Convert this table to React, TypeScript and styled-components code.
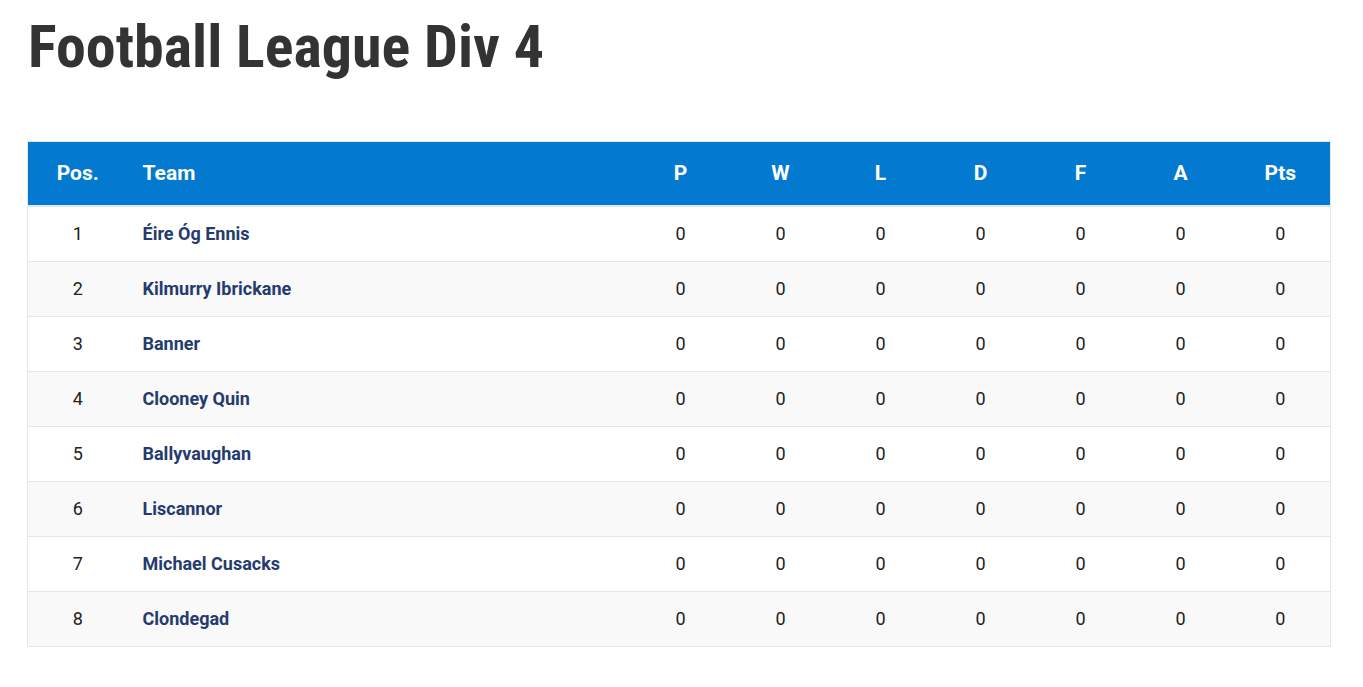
import styled, { createGlobalStyle } from 'styled-components';

const GlobalStyle = createGlobalStyle`
  body {
    margin: 0;
    background: #fff;
    font-family: Roboto, "Liberation Sans", sans-serif;
    color: #222;
  }
`;

const Page = styled.div`
  padding: 12px 32px 40px 27px;
`;

const Title = styled.h1`
  margin: 0 0 59px 1px;
  font-family: "Roboto Condensed", Roboto, sans-serif;
  font-stretch: condensed;
  font-weight: 700;
  font-size: 60px;
  line-height: 70px;
  color: #333;
`;

const Table = styled.table`
  width: 1304px;
  border-collapse: collapse;
  border: 1px solid #e6e6e6;
`;

const Head = styled.thead`
  background: #037acf;
  border-bottom: 2px solid #dde8ef;
`;

const Th = styled.th<{ $left?: boolean }>`
  height: 64px;
  padding: 0 15px;
  width: ${({ $left }) => ($left ? 'auto' : '100px')};
  box-sizing: border-box;
  text-align: ${({ $left }) => ($left ? 'left' : 'center')};
  color: #fff;
  font-size: 21px;
  font-weight: 700;
`;

const Row = styled.tr<{ $alt: boolean }>`
  background: ${({ $alt }) => ($alt ? '#f9f9f9' : '#fff')};
  border-top: 1px solid #e6e6e6;
`;

const Td = styled.td`
  height: 54px;
  padding: 0 15px;
  text-align: center;
  font-size: 18px;
  color: #222;
`;

const TeamCell = styled(Td)`
  text-align: left;
  font-weight: 700;
  color: #253b6e;
`;

const teams = [
  'Éire Óg Ennis',
  'Kilmurry Ibrickane',
  'Banner',
  'Clooney Quin',
  'Ballyvaughan',
  'Liscannor',
  'Michael Cusacks',
  'Clondegad',
];

const stats = ['P', 'W', 'L', 'D', 'F', 'A', 'Pts'];

export default function App() {
  return (
    <>
      <GlobalStyle />
      <Page>
        <Title>Football League Div 4</Title>
        <Table>
          <Head>
            <tr>
              <Th>Pos.</Th>
              <Th $left>Team</Th>
              {stats.map((s) => (
                <Th key={s}>{s}</Th>
              ))}
            </tr>
          </Head>
          <tbody>
            {teams.map((team, i) => (
              <Row key={team} $alt={i % 2 === 1}>
                <Td>{i + 1}</Td>
                <TeamCell>{team}</TeamCell>
                {stats.map((s) => (
                  <Td key={s}>0</Td>
                ))}
              </Row>
            ))}
          </tbody>
        </Table>
      </Page>
    </>
  );
}
